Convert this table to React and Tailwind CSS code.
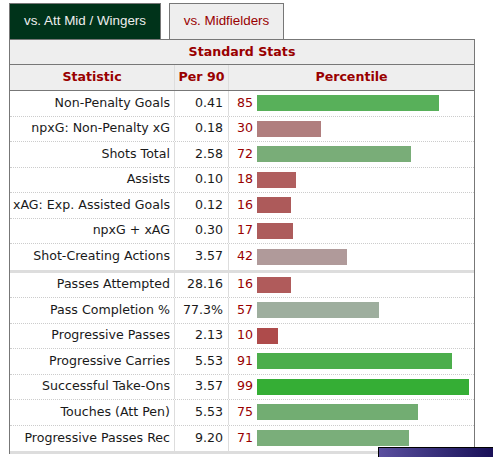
import React from "react";

const group1 = [
  ["Non-Penalty Goals", "0.41", 85, "#58b05a"],
  ["npxG: Non-Penalty xG", "0.18", 30, "#b07e7e"],
  ["Shots Total", "2.58", 72, "#79ad78"],
  ["Assists", "0.10", 18, "#b05f5f"],
  ["xAG: Exp. Assisted Goals", "0.12", 16, "#ad5a5a"],
  ["npxG + xAG", "0.30", 17, "#ad5c5c"],
  ["Shot-Creating Actions", "3.57", 42, "#b09a9a"],
];

const group2 = [
  ["Passes Attempted", "28.16", 16, "#b05b5b"],
  ["Pass Completion %", "77.3%", 57, "#9eae9e"],
  ["Progressive Passes", "2.13", 10, "#ae4b4b"],
  ["Progressive Carries", "5.53", 91, "#4cae4c"],
  ["Successful Take-Ons", "3.57", 99, "#35ae35"],
  ["Touches (Att Pen)", "5.53", 75, "#72ad72"],
  ["Progressive Passes Rec", "9.20", 71, "#7aae7a"],
];

function Row({ r, last }) {
  const [name, val, pct, color] = r;
  return (
    <div
      className={
        "flex " +
        (last
          ? "h-[28.5px] border-b-[3px] border-solid border-[#dddddd]"
          : "h-[25.5px] border-b border-dotted border-[#cccccc]")
      }
    >
      <div className="w-[165px] border-r border-[#dddddd] flex items-center justify-end pr-[4px] text-[#1a1a1a] whitespace-nowrap">
        {name}
      </div>
      <div className="w-[54px] border-r border-[#dddddd] flex items-center justify-end pr-[5px] text-[#1a1a1a]">
        {val}
      </div>
      <div className="flex-1 flex items-center pl-[4px]">
        <span className="w-[20px] text-right text-[#990000]">{pct}</span>
        <div
          className="ml-[4px] h-[16px]"
          style={{ width: `${pct * 2.14}px`, backgroundColor: color }}
        />
      </div>
    </div>
  );
}

export default function App() {
  return (
    <div className="relative w-[493px] h-[457px] overflow-hidden bg-white">
      <div className="flex pl-[9px] pt-[3px] gap-[8px] font-['Liberation_Sans',Arial,sans-serif] text-[13.4px]">
        <div className="w-[152px] h-[36px] bg-[#00331a] border-l border-t border-r border-[#777777] flex items-center justify-center text-[#eeeeee]">
          vs. Att Mid / Wingers
        </div>
        <div className="w-[115px] h-[36px] bg-[#eeeeee] border-l border-t border-r border-[#777777] flex items-center justify-center text-[#990000]">
          vs. Midfielders
        </div>
      </div>
      <div className="ml-[9px] w-[466px] border-l border-r border-t border-[#777777] font-['DejaVu_Sans',Verdana,sans-serif] text-[12.6px]">
        <div className="h-[25px] bg-[#eeeeee] border-b border-[#777777] flex items-center justify-center font-bold text-[#990000]">
          Standard Stats
        </div>
        <div className="h-[26px] bg-[#eeeeee] border-b border-[#777777] flex font-bold text-[#990000]">
          <div className="w-[165px] border-r border-[#dddddd] flex items-center justify-center">
            Statistic
          </div>
          <div className="w-[54px] border-r border-[#dddddd] flex items-center justify-center">
            Per 90
          </div>
          <div className="flex-1 flex items-center justify-center">Percentile</div>
        </div>
        {group1.map((r, i) => (
          <Row key={"a" + i} r={r} last={i === group1.length - 1} />
        ))}
        {group2.map((r, i) => (
          <Row key={"b" + i} r={r} last={i === group2.length - 1} />
        ))}
      </div>
      <div className="absolute left-[378px] top-[447px] right-0 bottom-0 border-t border-l border-black bg-gradient-to-r from-[#5b4f9f] to-[#1a1058]" />
    </div>
  );
}
